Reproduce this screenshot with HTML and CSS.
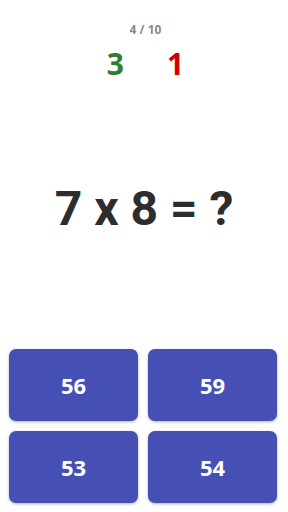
FILE: index.html
```html
<!DOCTYPE html>
<html>
<head>
<meta charset="utf-8">
<link rel="stylesheet" href="styles.css">
</head>
<body>
<div class="app">
  <header class="header">
    <div class="progress">4 / 10</div>
    <div class="scores">
      <span class="score correct">3</span>
      <span class="score wrong">1</span>
    </div>
  </header>
  <main class="question">7 x 8 = ?</main>
  <section class="answers">
    <button class="answer">56</button>
    <button class="answer">59</button>
    <button class="answer">53</button>
    <button class="answer">54</button>
  </section>
</div>
</body>
</html>
```
FILE: styles.css
```css
html, body {
  margin: 0;
  padding: 0;
  background: #ffffff;
}
.app {
  height: 512px;
  display: flex;
  flex-direction: column;
  font-family: "Open Sans", "Noto Sans", sans-serif;
}
.header {
  padding-top: 22px;
  padding-left: 3px;
  display: flex;
  flex-direction: column;
  align-items: center;
}
.progress {
  font-size: 12px;
  font-weight: 700;
  color: #8a8a8a;
  line-height: 16px;
}
.scores {
  display: flex;
  gap: 43px;
  margin-top: 6px;
  line-height: 40px;
}
.score {
  font-size: 30px;
  font-weight: 700;
}
.correct { color: #2e7d32; }
.wrong { color: #d50000; }
.question {
  flex: 1;
  display: flex;
  align-items: center;
  justify-content: center;
  font-family: Roboto, sans-serif;
  font-weight: 700;
  font-size: 48px;
  color: #2d2d2d;
  padding-bottom: 16px;
}
.answers {
  display: grid;
  grid-template-columns: 1fr 1fr;
  gap: 10px;
  padding: 0 11px 9px 9px;
}
.answer {
  height: 72px;
  border: none;
  border-radius: 7px;
  background: #4650b4;
  color: #ffffff;
  font-family: "Open Sans", "Noto Sans", sans-serif;
  font-weight: 700;
  font-size: 22px;
  box-shadow: 0 1px 3px rgba(0,0,0,0.3);
  padding: 0;
}
```
